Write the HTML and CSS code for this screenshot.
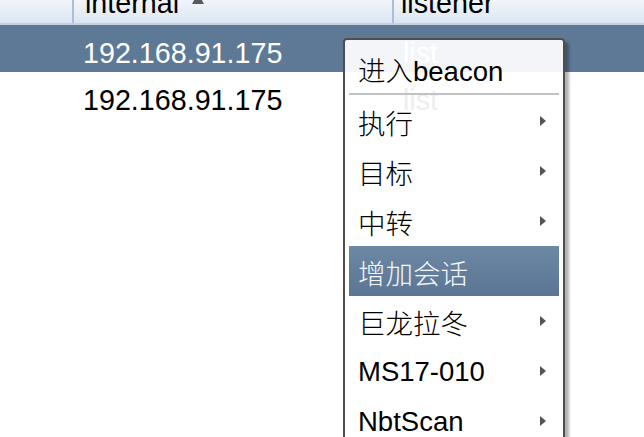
FILE: index.html
```html
<!DOCTYPE html>
<html>
<head>
<meta charset="utf-8">
<link rel="stylesheet" href="styles.css">
</head>
<body>
<div class="table">
  <div class="thead">
    <div class="th c0"></div>
    <div class="th c1"><span>internal</span><svg class="sort" width="12" height="9" viewBox="0 0 12 9"><polygon points="6,-4 12,7 0,7" fill="#5a5a5a"/></svg></div>
    <div class="th c2"><span>listener</span></div>
  </div>
  <div class="row sel">
    <div class="td c0"></div>
    <div class="td c1">192.168.91.175</div>
    <div class="td c2">list</div>
  </div>
  <div class="row">
    <div class="td c0"></div>
    <div class="td c1">192.168.91.175</div>
    <div class="td c2">list</div>
  </div>
</div>

<div class="menu">
  <div class="item first"><span>进入beacon</span></div>
  <div class="sep"></div>
  <div class="item"><span>执行</span><i class="arr"></i></div>
  <div class="item"><span>目标</span><i class="arr"></i></div>
  <div class="item"><span>中转</span><i class="arr"></i></div>
  <div class="item hl"><span>增加会话</span></div>
  <div class="item"><span>巨龙拉冬</span><i class="arr"></i></div>
  <div class="item"><span>MS17-010</span><i class="arr"></i></div>
  <div class="item"><span>NbtScan</span><i class="arr"></i></div>
</div>
</body>
</html>
```

FILE: styles.css
```css
html, body {
  margin: 0;
  padding: 0;
  background: #ffffff;
  overflow: hidden;
  width: 644px;
  height: 437px;
}
body {
  font-family: "Liberation Sans", "Noto Sans CJK SC", sans-serif;
  position: relative;
}
.table {
  display: flex;
  flex-direction: column;
}
.thead {
  display: flex;
  height: 23px;
  background: linear-gradient(#f1f5fa, #dce6f1);
  border-bottom: 2px solid #c3d3e5;
  overflow: hidden;
}
.th {
  display: flex;
  align-items: flex-end;
  font-size: 28.7px;
  line-height: 28px;
  color: #000;
  padding-bottom: 6px;
}
.th.c0 {
  width: 72px;
  border-right: 2px solid #a9c0d9;
}
.th.c1 {
  width: 307px;
  padding-left: 11px;
  border-right: 2px solid #a9c0d9;
}
.th.c2 {
  flex: 1;
  padding-left: 7px;
}
.sort {
  margin-left: 13px;
  margin-bottom: 11px;
  flex: none;
}
.row {
  display: flex;
  height: 47px;
  align-items: center;
  font-size: 28.7px;
  color: #000;
}
.td { padding-top: 10px; }
.td.c0 { width: 72px; }
.td.c1 { width: 311px; padding-left: 11px; }
.td.c2 { flex: 1; padding-left: 9px; }
.row.sel {
  background: #5d7996;
  color: #ffffff;
}
.menu {
  position: absolute;
  left: 343px;
  top: 38px;
  width: 210px;
  height: 420px;
  border: 2px solid #4e4e4e;
  border-radius: 4px;
  background: rgba(255, 255, 255, 0.93);
  box-shadow: 4px 4px 3px rgba(0, 0, 0, 0.3);
  padding: 3px 4px 0;
  display: flex;
  flex-direction: column;
  font-family: "Liberation Sans", "Noto Sans CJK SC", sans-serif;
  font-size: 27.5px;
  font-weight: 300;
}
.item {
  height: 50px;
  flex: none;
  display: flex;
  align-items: center;
  justify-content: space-between;
  padding: 0 13px 0 9px;
  color: #000;
}
.item span { padding-top: 2px; }
.item.first {
  height: 50px;
  padding-top: 0;
  box-sizing: border-box;
}
.sep {
  height: 2px;
  background: #c2c2c2;
  margin: 0 0 1px;
  flex: none;
}
.item.hl {
  background: linear-gradient(#6c88a5, #5a7694);
  color: #f4f7fa;
}
.arr {
  width: 0;
  height: 0;
  border-top: 5px solid transparent;
  border-bottom: 5px solid transparent;
  border-left: 6px solid #555;
}
```
